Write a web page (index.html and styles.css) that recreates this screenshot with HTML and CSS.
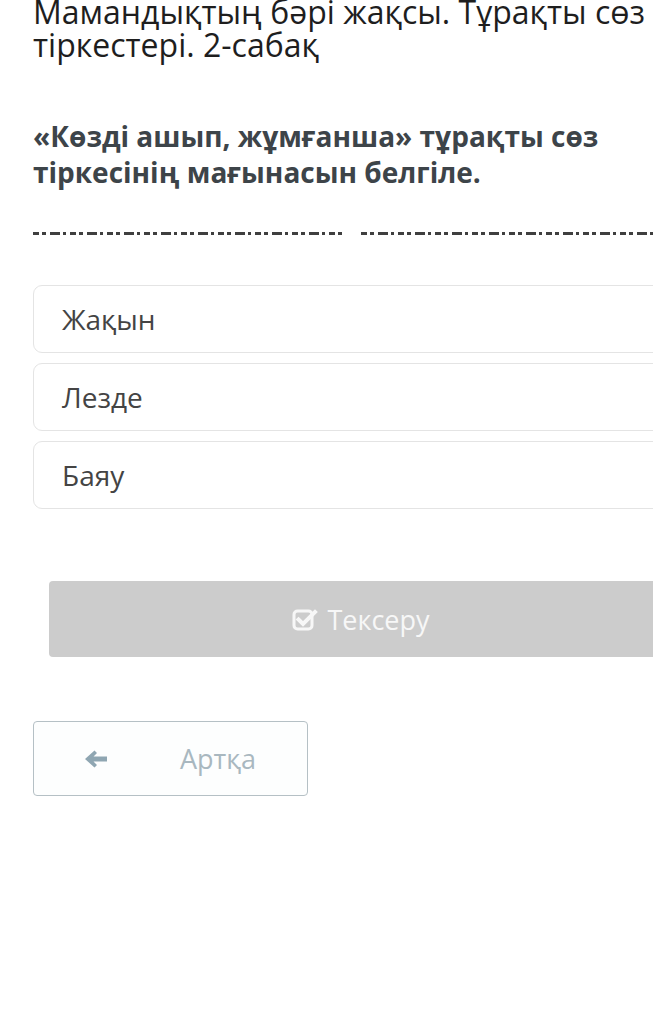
FILE: index.html
```html
<!DOCTYPE html>
<html lang="kk">
<head>
    <meta charset="UTF-8" />
    <meta name="viewport" content="width=device-width, initial-scale=1" />
    <title>Тұрақты сөз тіркестері</title>
    <link rel="stylesheet" href="styles.css">
</head>
<body>

    <div class="page">
        <h1 class="lesson-title">Мамандықтың бәрі жақсы. Тұрақты сөз тіркестері. 2-сабақ</h1>

        <div class="question">«Көзді ашып, жұмғанша» тұрақты сөз тіркесінің мағынасын белгіле.</div>

        <div class="cut-line">
            <div class="cut-part wide"></div>
            <div class="cut-part"></div>
        </div>

        <div class="answers">
            <div class="answer">Жақын</div>
            <div class="answer">Лезде</div>
            <div class="answer">Баяу</div>
        </div>

        <button class="check-btn">
            <svg class="check-icon" viewBox="0 0 26 24" width="26" height="24">
                <rect x="2" y="4" width="18" height="18" rx="3.5" fill="none" stroke="currentColor" stroke-width="3"/>
                <path d="M6.5 12.5l4.5 4.5L23 5" fill="none" stroke="currentColor" stroke-width="4" stroke-linecap="square"/>
            </svg>
            Тексеру
        </button>

        <button class="back-btn">
            <svg class="back-icon" viewBox="0 0 24 20" width="24" height="20">
                <path d="M1 10L10.5 1.5L13 4L9.5 7.5H23V12.5H9.5L13 16L10.5 18.5Z" fill="currentColor"/>
            </svg>
            <span>Артқа</span>
        </button>
    </div>

</body>
</html>
```

FILE: styles.css
```css
body {
    font-family: "Open Sans", Arial, sans-serif;
    margin: 0;
    padding: 0;
    background-color: #fff;
    color: #222;
    overflow: hidden;
}
.page {
    width: 656px;
    margin-left: 33px;
    padding-top: 1px;
    margin-top: -6px;
}
.lesson-title {
    margin: 0;
    font-size: 32px;
    font-weight: 400;
    line-height: 33px;
    color: #1e1e1e;
}
.question {
    margin-top: 57px;
    font-size: 28px;
    font-weight: 700;
    line-height: 36px;
    color: #3d4449;
}
.cut-line {
    display: flex;
    gap: 16px;
    height: 3px;
    margin-top: 42px;
}
.cut-part {
    width: 304px;
    background: repeating-linear-gradient(90deg,
        #3f3f3f 0 6px, transparent 6px 9px,
        #3f3f3f 9px 13px, transparent 13px 17px,
        #3f3f3f 17px 27px, transparent 27px 30px,
        #3f3f3f 30px 33px, transparent 33px 37px);
}
.cut-part.wide {
    width: 312px;
}
.answers {
    margin-top: 50px;
    display: flex;
    flex-direction: column;
    gap: 10px;
}
.answer {
    height: 68px;
    box-sizing: border-box;
    border: 1px solid #e4e4e4;
    border-radius: 9px;
    padding-left: 28px;
    display: flex;
    align-items: center;
    font-size: 28px;
    color: #444;
}
.check-btn {
    display: flex;
    align-items: center;
    justify-content: center;
    gap: 9px;
    width: 624px;
    height: 76px;
    margin: 72px 0 0 16px;
    background: #cccccc;
    border: none;
    border-radius: 4px;
    color: #f7f7f7;
    font-family: inherit;
    font-size: 27px;
}
.back-btn {
    display: flex;
    align-items: center;
    width: 275px;
    height: 75px;
    margin-top: 64px;
    padding: 0 0 0 50px;
    box-sizing: border-box;
    background: #fdfefe;
    border: 1px solid #b5c0c5;
    border-radius: 4px;
    font-family: inherit;
    font-size: 27px;
    color: #a9b8c0;
}
.back-icon {
    color: #8fa6b2;
}
.back-btn span {
    margin-left: 72px;
}
```
